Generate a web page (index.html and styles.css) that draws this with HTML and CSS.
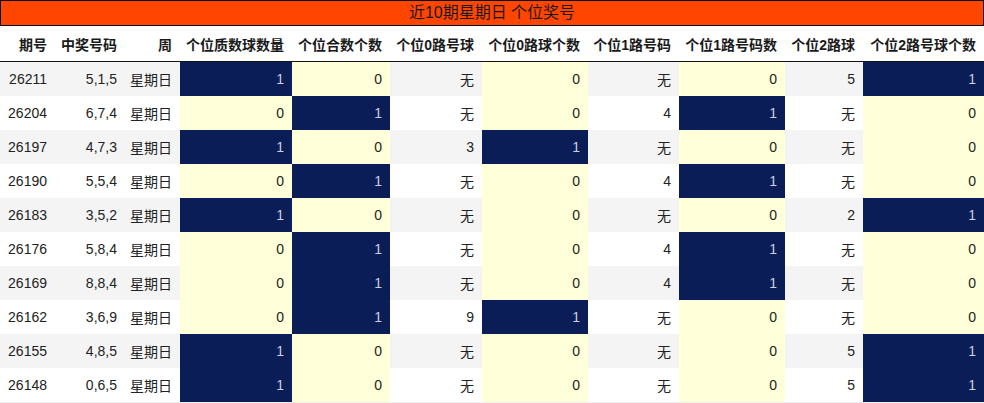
FILE: index.html
```html
<!DOCTYPE html>
<html lang="zh">
<head>
<meta charset="utf-8">
<link rel="stylesheet" href="styles.css">
</head>
<body>
<div class="title">近10期星期日 个位奖号</div>
<table class="grid">
<colgroup>
<col style="width:55px"><col style="width:70px"><col style="width:55px"><col style="width:112px"><col style="width:98px"><col style="width:92px"><col style="width:106px"><col style="width:91px"><col style="width:106px"><col style="width:78px"><col style="width:121px">
</colgroup>
<thead>
<tr><th>期号</th><th>中奖号码</th><th>周</th><th>个位质数球数量</th><th>个位合数个数</th><th>个位0路号球</th><th>个位0路球个数</th><th>个位1路号码</th><th>个位1路号码数</th><th>个位2路球</th><th>个位2路号球个数</th></tr>
</thead>
<tbody>
<tr><td>26211</td><td>5,1,5</td><td>星期日</td><td class="n">1</td><td class="y">0</td><td>无</td><td class="y">0</td><td>无</td><td class="y">0</td><td>5</td><td class="n">1</td></tr>
<tr><td>26204</td><td>6,7,4</td><td>星期日</td><td class="y">0</td><td class="n">1</td><td>无</td><td class="y">0</td><td>4</td><td class="n">1</td><td>无</td><td class="y">0</td></tr>
<tr><td>26197</td><td>4,7,3</td><td>星期日</td><td class="n">1</td><td class="y">0</td><td>3</td><td class="n">1</td><td>无</td><td class="y">0</td><td>无</td><td class="y">0</td></tr>
<tr><td>26190</td><td>5,5,4</td><td>星期日</td><td class="y">0</td><td class="n">1</td><td>无</td><td class="y">0</td><td>4</td><td class="n">1</td><td>无</td><td class="y">0</td></tr>
<tr><td>26183</td><td>3,5,2</td><td>星期日</td><td class="n">1</td><td class="y">0</td><td>无</td><td class="y">0</td><td>无</td><td class="y">0</td><td>2</td><td class="n">1</td></tr>
<tr><td>26176</td><td>5,8,4</td><td>星期日</td><td class="y">0</td><td class="n">1</td><td>无</td><td class="y">0</td><td>4</td><td class="n">1</td><td>无</td><td class="y">0</td></tr>
<tr><td>26169</td><td>8,8,4</td><td>星期日</td><td class="y">0</td><td class="n">1</td><td>无</td><td class="y">0</td><td>4</td><td class="n">1</td><td>无</td><td class="y">0</td></tr>
<tr><td>26162</td><td>3,6,9</td><td>星期日</td><td class="y">0</td><td class="n">1</td><td>9</td><td class="n">1</td><td>无</td><td class="y">0</td><td>无</td><td class="y">0</td></tr>
<tr><td>26155</td><td>4,8,5</td><td>星期日</td><td class="n">1</td><td class="y">0</td><td>无</td><td class="y">0</td><td>无</td><td class="y">0</td><td>5</td><td class="n">1</td></tr>
<tr><td>26148</td><td>0,6,5</td><td>星期日</td><td class="n">1</td><td class="y">0</td><td>无</td><td class="y">0</td><td>无</td><td class="y">0</td><td>5</td><td class="n">1</td></tr>
</tbody>
</table>
</body>
</html>
```
FILE: styles.css
```css
html, body {
  margin: 0;
  padding: 0;
  background: #fff;
}
body {
  width: 984px;
  font-family: "Liberation Sans", Arial, "Noto Sans CJK SC", sans-serif;
  font-size: 14px;
  color: #222;
}
.title {
  box-sizing: border-box;
  height: 26px;
  border: 1px solid #000;
  background: #ff4500;
  color: #1a1a1a;
  font-size: 16px;
  line-height: 23px;
  text-align: center;
}
.grid {
  width: 984px;
  border-collapse: collapse;
  table-layout: fixed;
}
.grid th {
  height: 35px;
  padding: 0 8px 0 0;
  text-align: right;
  font-weight: bold;
  color: #1a1a1a;
  border-bottom: 1px solid #111;
  white-space: nowrap;
}
.grid td {
  height: 34px;
  padding: 0 8px 0 0;
  text-align: right;
  white-space: nowrap;
}
.grid tbody tr:nth-child(odd) td {
  background: #f4f4f4;
}
.grid tbody tr:last-child td {
  border-bottom: 1px solid #eee;
}
.grid tbody tr td.n {
  background: #0a1d56;
  color: #c9d0e0;
}
.grid tbody tr td.y {
  background: #ffffd9;
}
```
